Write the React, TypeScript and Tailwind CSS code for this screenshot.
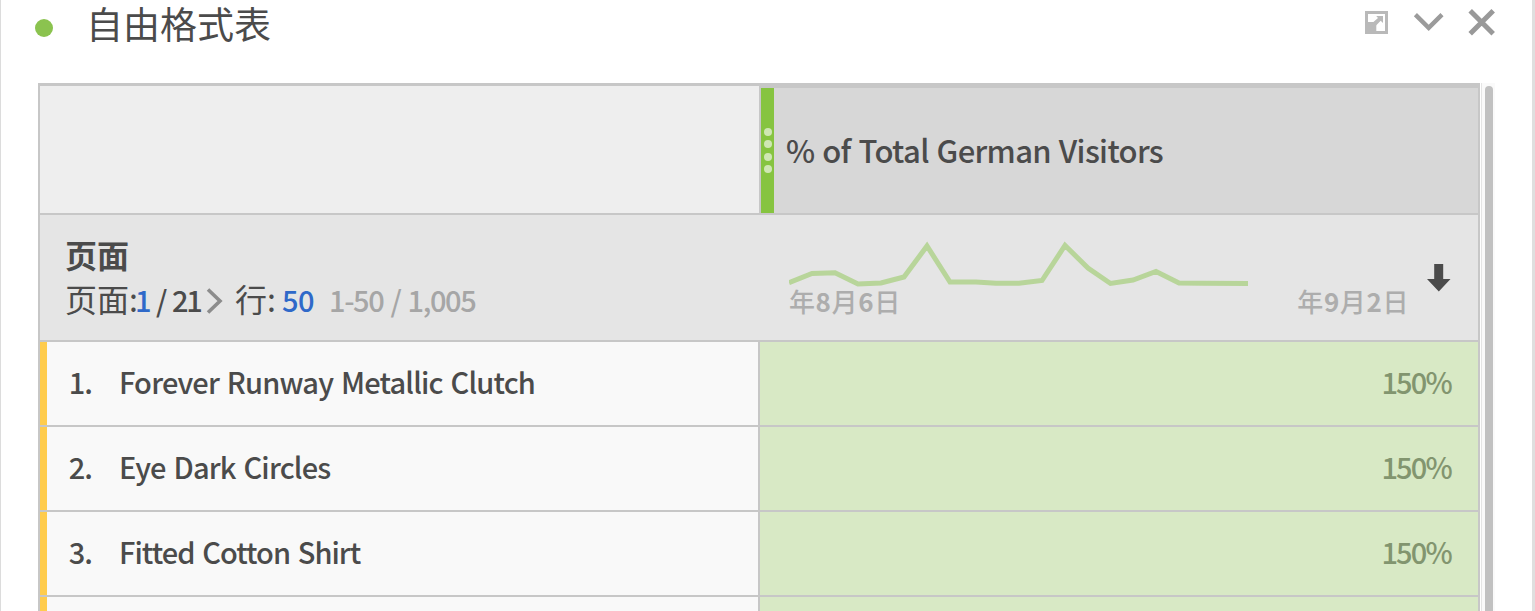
import React from "react";

const rows = [
  { n: "1.", name: "Forever Runway Metallic Clutch", spacing: "tracking-[-0.8px]", value: "150%" },
  { n: "2.", name: "Eye Dark Circles", spacing: "tracking-[-0.8px]", value: "150%" },
  { n: "3.", name: "Fitted Cotton Shirt", spacing: "tracking-[-0.95px]", value: "150%" },
];

function PanelHeader() {
  return (
    <header className="flex h-[83px] shrink-0 items-start pl-[34px]">
      <span className="mt-[19px] h-[18px] w-[18px] rounded-full bg-[#8bc34f]" />
      <h1 className="ml-[33px] text-[37px] leading-[46px]">自由格式表</h1>
      <div className="mt-2 mr-[36px] ml-auto flex">
        <svg className="mt-[3px] h-[23px] w-[23px]" viewBox="0 0 23 23">
          <path d="M0 0H23V23H0Z" fill="#b9b9b9" />
          <path d="M3 3H20V20H11.3V12.5L9 11H3Z" fill="#fff" />
          <path d="M11.2 5H18V12L15.7 9.8L11 14.5L7.8 11.6L13 7Z" fill="#b9b9b9" />
        </svg>
        <svg className="ml-[25px] h-[28px] w-[32px]" viewBox="0 0 32 28" fill="none" stroke="#9b9b9b" strokeWidth="4.4">
          <path d="M2.4 6.6L15.7 19.8L29 6.6" />
        </svg>
        <svg className="ml-[23px] h-[30px] w-[28px]" viewBox="0 0 28 30" fill="none" stroke="#999999" strokeWidth="5">
          <path d="M2.2 2.8L25.2 25.8M25.2 2.8L2.2 25.8" />
        </svg>
      </div>
    </header>
  );
}

function ColumnHeader() {
  return (
    <div className="flex h-[132px] shrink-0 border-b-2 border-[#c7c7c7]">
      <div className="w-[721px] border-t-[3px] border-r-2 border-[#c7c7c7] bg-[#eeeeee]" />
      <div className="flex flex-1 items-center border-t-[5px] border-[#c7c7c7] bg-[#d7d7d7]">
        <div className="flex h-full w-[13px] flex-col items-center justify-center gap-[4.5px] bg-[#86c440]">
          {[0, 1, 2, 3].map((i) => (
            <span key={i} className="h-2 w-2 rounded-full bg-[#cfe7b3]" />
          ))}
        </div>
        <span className="mb-px ml-[12px] text-[31px] leading-[40px] font-medium tracking-[-0.65px] whitespace-pre [word-spacing:1.5px]">
          % of Total German Visitors
        </span>
      </div>
    </div>
  );
}

function Summary() {
  return (
    <div className="flex h-[127px] shrink-0 border-b-2 border-[#c7c7c7] bg-[#e5e5e5]">
      <div className="w-[721px] pt-[17px] pl-[25px]">
        <div className="text-[32px] leading-[44px] font-bold">页面</div>
        <div className="flex items-baseline text-[29px] leading-[44px] font-medium whitespace-pre">
          <span className="w-[70px] text-[32px] font-normal">页面:</span>
          <span className="w-[21px] text-[#2f69c9]">1</span>
          <span className="w-[16px]">/</span>
          <span className="w-[34px] tracking-[-2.4px]">21</span>
          <svg className="relative top-[2px] h-[26px] w-[18px]" viewBox="0 0 18 26" fill="none" stroke="#8c8c8c" strokeWidth="3.6">
            <path d="M2 1.5L14 13L2 24.5" />
          </svg>
          <span className="ml-[11px] w-[47px] text-[32px] font-normal">行:</span>
          <span className="w-[47px] text-[#2f69c9] tracking-[-0.5px]">50</span>
          <span className="text-[#a6a6a6] tracking-[-1.4px] [word-spacing:2px]">1-50 / 1,005</span>
        </div>
      </div>
      <div className="w-[648px] pt-[23px] pl-[28px]">
        <svg className="h-[52px] w-[470px]" viewBox="0 0 470 52" fill="none" stroke="#b8d59a" strokeWidth="5">
          <path d="M0 44.8L23 35.5L46 34.7L69 46L92 45L115 39L138 8L161 44L187 44L207 45.3L230 45.3L253 42.5L276 7.5L299 30L321.5 45.5L344 42L367 33.5L390 45L413 45.3L459 45.5" />
        </svg>
        <div className="-mt-[9px] flex justify-between text-[26px] leading-[39px] font-medium tracking-[0.6px] text-[#adadad]">
          <span>年<b>8</b>月<b>6</b>日</span>
          <span>年<b>9</b>月<b>2</b>日</span>
        </div>
      </div>
      <svg className="mt-[49px] ml-[18px] h-[28px] w-[24px]" viewBox="0 0 24 28" fill="#4b4b4b">
        <path d="M7.2 0H16.2V15H23.5L11.8 27.5L0 15H7.2Z" />
      </svg>
    </div>
  );
}

function Row({ n, name, spacing, value }: { n: string; name: string; spacing: string; value: string }) {
  return (
    <div className="flex h-[85px] shrink-0 border-b-2 border-[#c7c7c7] text-[29px] leading-[79px] font-medium whitespace-pre">
      <div className="w-[7px] bg-[#ffcc4d]" />
      <div className="flex w-[713px] border-r-2 border-[#c7c7c7] bg-[#f9f9f9]">
        <span className="w-[45px] text-right tracking-[-1px]">{n}</span>
        <span className={"ml-[27px] [word-spacing:2px] " + spacing}>{name}</span>
      </div>
      <div className="flex-1 bg-[#d8e9c5] pr-[27px] text-right tracking-[-1.8px] text-[#82956f]">{value}</div>
    </div>
  );
}

export default function App() {
  return (
    <main className="flex h-[611px] w-full flex-col overflow-hidden border-r-[3px] border-l border-r-[#dfdfdf] border-l-[#dcdcdc] bg-white font-['Noto_Sans_CJK_SC',sans-serif] text-[#4b4b4b]">
      <PanelHeader />
      <div className="flex flex-1 overflow-hidden pl-[37px]">
        <section className="flex w-[1442px] shrink-0 flex-col overflow-hidden border-x-2 border-[#c7c7c7]">
          <ColumnHeader />
          <Summary />
          {rows.map((row) => (
            <Row key={row.n} {...row} />
          ))}
          <Row n="" name="" spacing="" value="" />
        </section>
        <div className="ml-px flex w-[14px] justify-center border-l border-[#e5e5e5] bg-[#fafafa] pt-[3px]">
          <div className="w-2 rounded-t-full bg-[#c1c1c1]" />
        </div>
      </div>
    </main>
  );
}
